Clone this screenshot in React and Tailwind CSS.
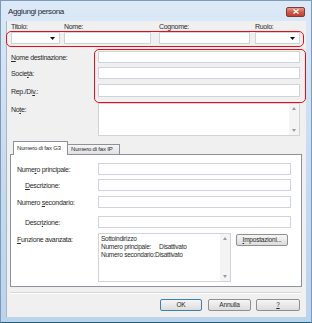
import React from 'react';

const Input = ({ w, className = '' }) => (
  <div className={`h-[12px] bg-white border border-[#d0d3d9] ${w} ${className}`} />
);

const Combo = ({ w }) => (
  <div className={`relative h-[12px] bg-white border border-[#d0d3d9] ${w} flex items-center justify-end pr-[4px]`}>
    <svg width="5" height="3" viewBox="0 0 5 3">
      <path d="M0 0 L5 0 L2.5 3 Z" fill="#111" />
    </svg>
  </div>
);

const ScrollStrip = () => (
  <div className="w-[10px] h-full bg-[#f4f4f4] flex flex-col items-center justify-between py-[3px]">
    <svg width="4" height="3" viewBox="0 0 4 3">
      <path d="M0 3 L2 0 L4 3 Z" fill="#9a9a9a" />
    </svg>
    <svg width="4" height="3" viewBox="0 0 4 3">
      <path d="M0 0 L4 0 L2 3 Z" fill="#9a9a9a" />
    </svg>
  </div>
);

const Label = ({ children, className = '' }) => (
  <div className={`text-[7px] leading-[9px] tracking-[-0.3px] whitespace-nowrap ${className}`}>{children}</div>
);

const Button = ({ children, w, focus }) => (
  <div
    className={`h-[12px] ${w} rounded-[2px] border ${
      focus ? 'border-[#3c7fb1]' : 'border-[#8e8f8f]'
    } bg-gradient-to-b from-[#f6f6f6] to-[#dcdcdc] flex items-center justify-center text-[6.5px] tracking-[-0.2px]`}
  >
    {children}
  </div>
);

export default function App() {
  return (
    <div className="relative w-[312px] h-[323px] overflow-hidden bg-gradient-to-b from-[#dce9f7] via-[#c8dbef] to-[#bcd3ec] border border-[#7d9aba] border-b-[#24607c] font-['Liberation_Sans',Arial,sans-serif] text-[#2a2a2a]">
      {/* Title bar */}
      <div className="h-[20px] flex items-center justify-between pl-[7px] pr-[6px]">
        <div className="text-[8px] tracking-[-0.4px] text-[#1e2a3a] pt-[2px]">Aggiungi persona</div>
        <div className="mt-[1px] w-[19px] h-[10px] rounded-[2px] border border-[#7e3a33] bg-gradient-to-b from-[#e49a8f] via-[#cf5b49] to-[#c2412d] flex items-center justify-center">
          <svg width="6" height="5" viewBox="0 0 6 5">
            <path d="M0.5 0.5 L5.5 4.5 M5.5 0.5 L0.5 4.5" stroke="#fff" strokeWidth="1.3" />
          </svg>
        </div>
      </div>

      {/* Client area */}
      <div className="mx-[5px] w-[300px] h-[296px] bg-[#f0f0f0] border-l border-[#a7b8cb]">
        {/* Row 1 */}
        <div className="flex pl-[4px] pt-[1px]">
          <div className="w-[49px]">
            <Label className="h-[10px]">Titolo:</Label>
            <Combo w="w-[49px]" />
          </div>
          <div className="w-[87px] ml-[4px]">
            <Label className="h-[10px]">Nome:</Label>
            <Input w="w-[87px]" />
          </div>
          <div className="w-[91px] ml-[8px]">
            <Label className="h-[10px]">Cognome:</Label>
            <Input w="w-[91px]" />
          </div>
          <div className="w-[45px] ml-[5px]">
            <Label className="h-[10px]">Ruolo:</Label>
            <Combo w="w-[45px]" />
          </div>
        </div>

        {/* Name fields */}
        <div className="flex items-center h-[12px] mt-[7px]">
          <Label className="w-[91px] pl-[4px]"><span className="underline">N</span>ome destinazione:</Label>
          <Input w="w-[202px]" />
        </div>
        <div className="flex items-center h-[12px] mt-[4px]">
          <Label className="w-[91px] pl-[4px]">Socie<span className="underline">t</span>à:</Label>
          <Input w="w-[202px]" />
        </div>
        <div className="flex items-center h-[13px] mt-[5px]">
          <Label className="w-[91px] pl-[4px] pt-[2px]">Rep./Di<span className="underline">v</span>.:</Label>
          <Input w="w-[202px] h-[13px]" />
        </div>

        {/* Note */}
        <div className="flex items-start mt-[6px]">
          <Label className="w-[91px] pl-[4px] pt-[2px]">No<span className="underline">t</span>e:</Label>
          <div className="w-[202px] h-[33px] bg-white border border-[#d0d3d9] flex justify-end">
            <ScrollStrip />
          </div>
        </div>

        {/* Tabs */}
        <div className="relative z-10 flex items-end ml-[6px] mt-[5px] h-[13px]">
          <div className="w-[55px] h-[14px] -mb-px bg-white border-l border-t border-r border-[#8d9199] flex items-center pl-[3px] text-[6px] tracking-[-0.2px]">
            Numero di fax G3
          </div>
          <div className="w-[52px] h-[10px] bg-gradient-to-b from-[#f5f5f5] to-[#e2e2e2] border-t border-r border-[#8d9199] flex items-center pl-[3px] text-[6px] tracking-[-0.2px]">
            Numero di fax IP
          </div>
        </div>
        <div className="ml-[3px] w-[292px] h-[133px] bg-white border border-[#8d9199] pt-[8px]">
          <div className="flex items-center h-[12px]">
            <Label className="w-[87px] pl-[6px]">Nume<span className="underline">r</span>o principale:</Label>
            <Input w="w-[193px]" />
          </div>
          <div className="flex items-center h-[12px] mt-[4px]">
            <Label className="w-[87px] pl-[14px]"><span className="underline">D</span>escrizione:</Label>
            <Input w="w-[193px]" />
          </div>
          <div className="flex items-center h-[12px] mt-[5px]">
            <Label className="w-[87px] pl-[6px]">Numero <span className="underline">s</span>econdario:</Label>
            <Input w="w-[193px]" />
          </div>
          <div className="flex items-center h-[12px] mt-[8px]">
            <Label className="w-[87px] pl-[14px]">Descr<span className="underline">i</span>zione:</Label>
            <Input w="w-[193px]" />
          </div>
          <div className="flex items-start mt-[5px]">
            <Label className="w-[87px] pl-[6px] pt-[2px]"><span className="underline">F</span>unzione avanzata:</Label>
            <div className="w-[133px] h-[49px] bg-white border border-[#d0d3d9] flex">
              <div className="flex-1 pl-[2px] pt-[1px] text-[6.5px] leading-[8px] tracking-[-0.25px] whitespace-nowrap">
                <div>Sottoindirizzo</div>
                <div><span className="inline-block w-[58px]">Numero principale:</span>Disattivato</div>
                <div>Numero secondario:Disattivato</div>
              </div>
              <ScrollStrip />
            </div>
            <div className="ml-[5px] mt-[1px]">
              <Button w="w-[52px]"><span className="underline">I</span>mpostazioni...</Button>
            </div>
          </div>
        </div>

        {/* Separator */}
        <div className="ml-[3px] mt-[5px] w-[291px] border-t border-[#d3d6da] border-b border-b-white" />

        {/* Buttons */}
        <div className="flex justify-end pr-[6px] mt-[5px]">
          <Button w="w-[42px]" focus>OK</Button>
          <div className="ml-[6px]"><Button w="w-[43px]">Annulla</Button></div>
          <div className="ml-[5px]"><Button w="w-[44px]"><span className="underline">?</span></Button></div>
        </div>
      </div>

      {/* Red annotation outlines */}
      <div className="absolute left-[5px] top-[30px] w-[298px] h-[16px] rounded-[5px] border-[1.5px] border-[#e3101c]" />
      <div className="absolute left-[93px] top-[48px] w-[212px] h-[54px] rounded-[5px] border-[1.5px] border-[#e3101c]" />
    </div>
  );
}
